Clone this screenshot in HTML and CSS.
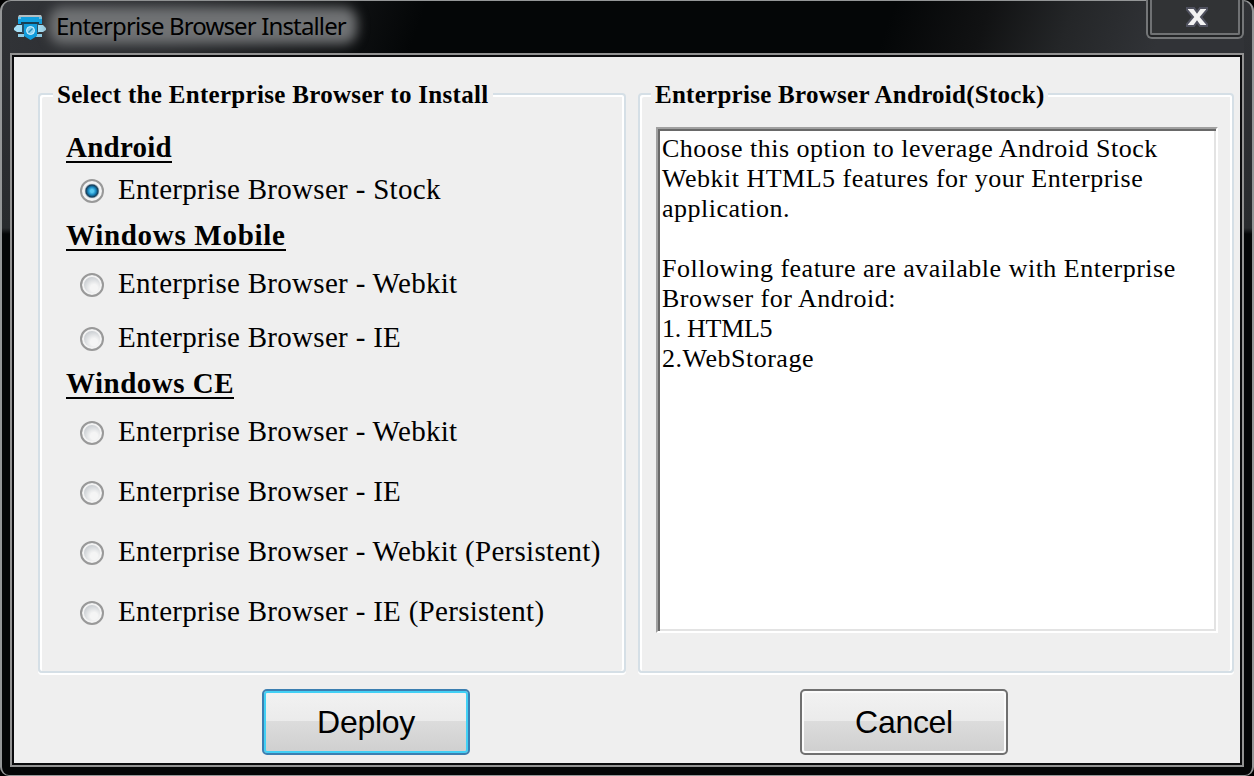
FILE: index.html
```html
<!DOCTYPE html>
<html lang="en">
<head>
<meta charset="utf-8">
<title>Enterprise Browser Installer</title>
<link rel="stylesheet" href="styles.css">
</head>
<body>
<div class="window">
  <header class="titlebar">
    <svg class="app-icon" width="32" height="26" viewBox="0 0 32 26">
      <path d="M4 2h24v7H4z" fill="#12a0e0"/>
      <path d="M5 0h22l1 2H4z" fill="#b4bec2"/>
      <path d="M4 2h3v2H4zM25 2h3v2h-3z" fill="#6fc5ea"/>
      <path d="M7 7h18v3H7z" fill="#173f55"/>
      <path d="M8 9h3v9H8zM22 9h3v9h-3z" fill="#27516a"/>
      <path d="M0 13l3-3h5v7H3l-3-2zM32 13l-3-3h-5v7h5l3-2z" fill="#a5def5"/>
      <path d="M4 19h6v3H4zM22 19h6v3h-6z" fill="#8ecbe4"/>
      <path d="M10 9h13v12l-6.500 4-6.500-4z" fill="#109bdb"/>
      <circle cx="16.500" cy="15.500" r="4" fill="#8bd1ef" stroke="#d4f2ff"/>
      <path d="M14.500 17.500l4-4" stroke="#238dbb" stroke-width="1.500"/>
    </svg>
    <h1 class="caption"><span class="caption-text">Enterprise Browser Installer</span></h1>
    <button class="close" aria-label="Close">
      <svg width="22" height="20" viewBox="0 0 22 20"><path d="M1 1h7l3 4 3-4h7v2l-6 7 6 7v2h-7l-3-4-3 4H1v-2l6-7-6-7z" fill="#f2f2f2" stroke="#50525f" stroke-width="2"/></svg>
    </button>
  </header>
  <main class="client">
    <div class="groups">
      <section class="group options">
        <h2 class="legend legend-left">Select the Enterprise Browser to Install</h2>
        <h3 class="platform android"><span>Android</span></h3>
        <label class="option stock"><i class="radio checked"></i><span>Enterprise Browser - Stock</span></label>
        <h3 class="platform mobile"><span>Windows Mobile</span></h3>
        <label class="option short"><i class="radio"></i><span>Enterprise Browser - Webkit</span></label>
        <label class="option short"><i class="radio"></i><span>Enterprise Browser - IE</span></label>
        <h3 class="platform ce"><span>Windows CE</span></h3>
        <label class="option"><i class="radio"></i><span>Enterprise Browser - Webkit</span></label>
        <label class="option"><i class="radio"></i><span>Enterprise Browser - IE</span></label>
        <label class="option"><i class="radio"></i><span>Enterprise Browser - Webkit (Persistent)</span></label>
        <label class="option"><i class="radio"></i><span>Enterprise Browser - IE (Persistent)</span></label>
      </section>
      <section class="group details">
        <h2 class="legend legend-right">Enterprise Browser Android(Stock)</h2>
        <div class="description">
          <p>Choose this option to leverage Android Stock<br>Webkit HTML5 features for your Enterprise<br>application.</p>
          <p>Following feature are available with Enterprise<br>Browser for Android:<br><span class="tight">1. HTML5</span><br>2.WebStorage</p>
        </div>
      </section>
    </div>
    <footer class="actions">
      <button class="button primary">Deploy</button>
      <button class="button">Cancel</button>
    </footer>
  </main>
</div>
</body>
</html>
```
FILE: styles.css
```css
* { box-sizing: border-box; }
body { margin: 0; background: #000; font-family: "Liberation Serif", serif; color: #000; }
h1, h2, h3, p { margin: 0; font-weight: normal; }
button { font: inherit; padding: 0; color: #000; }
.window {
  width: 1254px; height: 776px; padding: 0 8px 8px;
  border: solid #949697; border-width: 1px 2px; border-radius: 11px 11px 9px 9px;
  background:
    linear-gradient(#303236, #292b2e 227px, #040506 233px) 0 0 / 8px 100% no-repeat,
    linear-gradient(#303236, #292b2e 227px, #040506 233px) 100% 0 / 8px 100% no-repeat,
    linear-gradient(110deg, #323438 0, #292b2e 170px, #040607 400px, #040607 840px, #111213 930px, #242628 1010px, #313337 1100px) 0 0 / 100% 54px no-repeat,
    #040506;
}
.titlebar { display: flex; height: 52px; padding-left: 4px; }
.app-icon { margin-top: 14px; flex: none; }
.caption { flex: 1; padding: 13px 0 0 10px; font: 24px/24px "Noto Sans", sans-serif; letter-spacing: -.86px; }
.caption-text { position: relative; isolation: isolate; display: inline-block; height: 24px; white-space: nowrap; }
.caption-text::before { content: ""; position: absolute; z-index: -1; inset: -7px -11px -6px -7px; border-radius: 14px; background: #707274; filter: blur(6px); }
.close {
  width: 98px; height: 39px; margin-top: -1px; border: 2px solid #747678; border-top: 0;
  border-radius: 0 0 6px 6px; background: #313335; box-shadow: inset 2px 0 #232527, inset -2px 0 #232527, inset 0 -2px #232527, inset 4px 0 #707274, inset -4px 0 #707274, inset 0 -4px #707274;
  display: flex; justify-content: center; padding: 7px 0 0 3px;
}
.client { position: relative; height: 714px; border: 2px solid #929292; outline: 2px solid #0b0b0d; outline-offset: -4px; background: #efefef; padding: 38px 8px 0 26px; }
.groups { display: flex; gap: 12px; }
.group { height: 580px; border: 2px solid #d5dfe6; border-radius: 4px; box-shadow: inset 2px 2px #fff, inset -2px 0 #fff, 0 2px #fff; }
.options { width: 588px; padding-left: 26px; }
.details { width: 596px; padding-left: 16px; }
.legend { width: max-content; height: 32px; margin-top: -16px; padding: 0 4px; background: #efefef; font-size: 25px; line-height: 32px; font-weight: bold; white-space: nowrap; }
.legend-left { margin-left: -13px; letter-spacing: .31px; }
.legend-right { margin-left: -5px; letter-spacing: .27px; }
.platform { height: 37px; display: flex; align-items: center; padding-bottom: 2px; font-size: 29px; font-weight: bold; }
.platform span { height: 31px; line-height: 31px; border-bottom: 2px solid #000; }
.android { margin-top: 18px; padding-bottom: 0; letter-spacing: .25px; }
.mobile { height: 42px; padding-bottom: 4px; letter-spacing: .7px; }
.ce { letter-spacing: .5px; }
.option { height: 60px; display: flex; align-items: center; gap: 14px; padding-left: 14px; font-size: 29px; letter-spacing: .3px; white-space: nowrap; }
.option.stock { height: 50px; }
.option.short { height: 54px; }
.option span { padding-bottom: 4px; }
.radio { width: 24px; height: 24px; flex: none; border: 2px solid #999; border-radius: 50%; background: radial-gradient(circle at 60% 65%, #f5f5f5 20%, #c9cdd1 65%); box-shadow: inset 0 0 0 2px #f3f3f3; }
.checked { background: radial-gradient(circle at 50% 50%, #58c9f1 0 1.5px, #1684bd 4px, #173c57 6px, #e5e9ec 7.5px); }
.description { width: 562px; height: 506px; margin-top: 16px; padding: 5px 4px; background: #fff; border: 2px solid; border-color: #a0a0a0 #fff #fff #a0a0a0; box-shadow: inset 2px 2px #696969, inset -2px -2px #e3e3e3; font-size: 26px; line-height: 30px; letter-spacing: .5px; }
.description p { white-space: nowrap; margin-bottom: 30px; }
.tight { letter-spacing: -.3px; }
.actions { display: flex; gap: 330px; padding: 16px 0 0 224px; }
.button { width: 208px; height: 66px; border: 2px solid #707070; border-radius: 5px; background: linear-gradient(#f2f2f2, #ebebeb 48%, #dcdcdc 49%, #cfcfcf); box-shadow: inset 0 0 0 2px #fbfbfb; font: 32px "Liberation Sans", sans-serif; letter-spacing: -.3px; }
.primary { border-color: #3c7fb1; box-shadow: inset 0 0 0 2px #42d0f5; }
```
